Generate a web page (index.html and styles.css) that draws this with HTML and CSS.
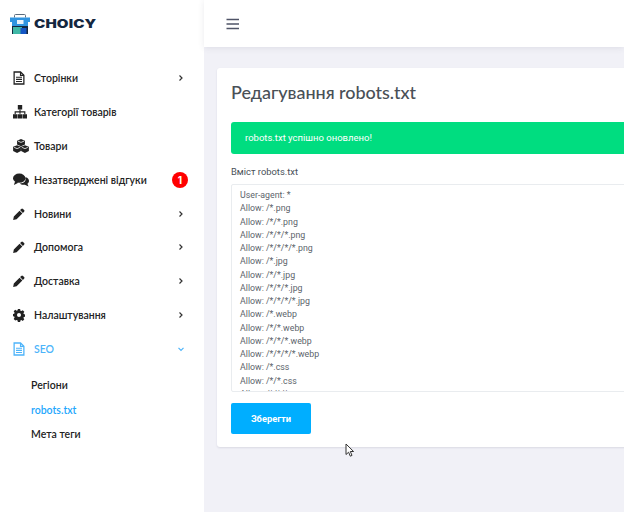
FILE: index.html
```html
<!DOCTYPE html>
<html lang="uk">
<head>
<meta charset="utf-8">
<title>robots.txt</title>
<link rel="stylesheet" href="styles.css">
</head>
<body>
<div class="app">
  <aside class="sidebar">
    <div class="logo">
      <svg class="logo-mark" width="20" height="20" viewBox="0 0 20 20">
        <path d="M4.500 3.500V1.500a1 1 0 0 1 1-1h9a1 1 0 0 1 1 1v2" fill="none" stroke="#5a6b7d" stroke-width="1"/>
        <rect x="0" y="3.500" width="20" height="4.500" fill="#2f94e0"/>
        <rect x="2" y="8" width="16" height="4" fill="#2f94e0"/>
        <rect x="2" y="12" width="16" height="8" fill="#14273f"/>
        <rect x="3" y="13" width="9" height="7" fill="#3fb8a6"/>
        <rect x="10.500" y="14" width="6" height="6" fill="#1456c4"/>
        <rect x="7" y="6" width="6.500" height="4" fill="#e9f2fa"/>
      </svg>
      <span class="logo-text">CHOICY</span>
    </div>
    <nav class="menu">
      <a class="item"><svg class="ico ico-sm" viewBox="0 0 16 18"><path d="M1.500 1h8.500l4.500 4.500V17h-13z" fill="#fff" stroke="#222" stroke-width="1.700"/><path d="M10 1v4.500h4.500" fill="none" stroke="#222" stroke-width="1.500"/><path d="M4 8h8M4 10.800h8M4 13.600h8" stroke="#222" stroke-width="1.500"/></svg><span class="label">Сторінки</span><svg class="chev" viewBox="0 0 8 8"><path d="M2.500 1.500l2.500 2.500-2.500 2.500" fill="none" stroke="#333" stroke-width="1.200"/></svg></a>
      <a class="item"><svg class="ico ico-md" viewBox="0 0 16 16"><path d="M5.500 0h5v5h-5zM0 10.500h5v5H0zM5.500 10.500h5v5h-5zM11 10.500h5v5h-5z" fill="#222"/><path d="M8 5v5M2.500 10.500V7.800h11v2.700" fill="none" stroke="#222" stroke-width="1.300"/></svg><span class="label">Категорії товарів</span></a>
      <a class="item"><svg class="ico ico-lg" viewBox="0 0 18 16"><path d="M9 0l4.500 1.900v4.500L9 8.300 4.500 6.400V1.900z" fill="#222"/><path d="M4.500 7l4.400 1.900v4.900L4.500 16 0 13.800V8.900zM13.500 7l4.500 1.900v4.900L13.500 16l-4.400-2.200V8.900z" fill="#222"/><path d="M5.500 2.400L9 3.900l3.500-1.500M1.200 9.600l3.300 1.400 3.300-1.400M10.200 9.600l3.300 1.400 3.300-1.400" fill="none" stroke="#fff" stroke-width=".9"/></svg><span class="label">Товари</span></a>
      <a class="item"><svg class="ico ico-lg" viewBox="0 0 18 15"><ellipse cx="7" cy="5.500" rx="7" ry="5.200" fill="#222"/><path d="M2.500 8.500L1 13l5-2.500z" fill="#222"/><path d="M15.500 4.700C17 5.700 18 7 18 8.500c0 1.300-.7 2.400-1.800 3.300l1.300 3-4.200-2c-2.300.4-4.600-.2-5.800-1.500 4.300.2 8.300-2.800 6-6.600z" fill="#222"/></svg><span class="label">Незатверджені відгуки</span><span class="badge">1</span></a>
      <a class="item"><svg class="ico ico-sm" viewBox="0 0 16 16"><path d="M11 1.200a1.600 1.600 0 0 1 2.300 0l1.500 1.500a1.600 1.600 0 0 1 0 2.300l-1.600 1.600-3.800-3.800zM8.700 3.500l3.800 3.800-7.700 7.700-4.600.9.900-4.700z" fill="#222"/></svg><span class="label">Новини</span><svg class="chev" viewBox="0 0 8 8"><path d="M2.500 1.500l2.500 2.500-2.500 2.500" fill="none" stroke="#333" stroke-width="1.200"/></svg></a>
      <a class="item"><svg class="ico ico-sm" viewBox="0 0 16 16"><path d="M11 1.200a1.600 1.600 0 0 1 2.300 0l1.500 1.500a1.600 1.600 0 0 1 0 2.300l-1.600 1.600-3.800-3.800zM8.700 3.500l3.800 3.800-7.700 7.700-4.600.9.900-4.700z" fill="#222"/></svg><span class="label">Допомога</span><svg class="chev" viewBox="0 0 8 8"><path d="M2.500 1.500l2.500 2.500-2.500 2.500" fill="none" stroke="#333" stroke-width="1.200"/></svg></a>
      <a class="item"><svg class="ico ico-sm" viewBox="0 0 16 16"><path d="M11 1.200a1.600 1.600 0 0 1 2.300 0l1.500 1.500a1.600 1.600 0 0 1 0 2.300l-1.600 1.600-3.800-3.800zM8.700 3.500l3.800 3.800-7.700 7.700-4.600.9.900-4.700z" fill="#222"/></svg><span class="label">Доставка</span><svg class="chev" viewBox="0 0 8 8"><path d="M2.500 1.500l2.500 2.500-2.500 2.500" fill="none" stroke="#333" stroke-width="1.200"/></svg></a>
      <a class="item"><svg class="ico ico-sm" viewBox="0 0 16 16"><path fill-rule="evenodd" d="M6.500 0h3l.4 2.200 1.300.6L13 1.500l2.100 2.100-1.200 1.900.5 1.300 1.600.4v3l-1.600.4-.5 1.300 1.200 1.900-2.100 2.100-1.800-1.200-1.300.5-.4 2.200h-3l-.4-2.200-1.300-.5L3 15.400.9 13.300l1.200-1.900-.5-1.300L0 9.700v-3l1.600-.4.500-1.300L.9 3.100 3 1l1.900 1.300 1.300-.6zM8 5.300a2.700 2.700 0 1 0 0 5.400 2.700 2.700 0 0 0 0-5.400z" fill="#222"/></svg><span class="label">Налаштування</span><svg class="chev" viewBox="0 0 8 8"><path d="M2.500 1.500l2.500 2.500-2.500 2.500" fill="none" stroke="#333" stroke-width="1.200"/></svg></a>
      <a class="item active"><svg class="ico ico-sm" viewBox="0 0 16 18"><path d="M1.500 1h8.500l4.500 4.500V17h-13z" fill="#fff" stroke="#4db4fa" stroke-width="1.700"/><path d="M10 1v4.500h4.500" fill="none" stroke="#4db4fa" stroke-width="1.500"/><path d="M4 8h8M4 10.800h8M4 13.600h8" stroke="#4db4fa" stroke-width="1.500"/></svg><span class="label">SEO</span><svg class="chev" viewBox="0 0 8 8"><path d="M1.500 2.800l2.500 2.500 2.500-2.500" fill="none" stroke="#4db4fa" stroke-width="1.200"/></svg></a>
      <div class="submenu">
        <a class="subitem">Регіони</a>
        <a class="subitem current">robots.txt</a>
        <a class="subitem">Мета теги</a>
      </div>
    </nav>
  </aside>
  <div class="main">
    <header class="topbar">
      <svg class="burger" width="14" height="12" viewBox="0 0 14 12"><path d="M.5 1.500h12.500M.5 6h12.500M.5 10.500h12.500" stroke="#4f5467" stroke-width="1.500"/></svg>
    </header>
    <div class="content">
      <section class="card">
        <h1 class="title">Редагування robots.txt</h1>
        <div class="alert">robots.txt успішно оновлено!</div>
        <label class="field-label" for="robots">Вміст robots.txt</label>
        <textarea class="editor" id="robots" readonly>User-agent: *
Allow: /*.png
Allow: /*/*.png
Allow: /*/*/*.png
Allow: /*/*/*/*.png
Allow: /*.jpg
Allow: /*/*.jpg
Allow: /*/*/*.jpg
Allow: /*/*/*/*.jpg
Allow: /*.webp
Allow: /*/*.webp
Allow: /*/*/*.webp
Allow: /*/*/*/*.webp
Allow: /*.css
Allow: /*/*.css
Allow: /*/*/*.css</textarea>
        <button class="save" type="button">Зберегти</button>
      </section>
    </div>
  </div>
</div>
<svg class="cursor" width="10" height="15" viewBox="0 0 10 15"><path d="M1 1v10.500l2.600-2.300 1.700 4 1.700-.8-1.700-3.900h3.300z" fill="#fff" stroke="#333" stroke-width="1"/></svg>
</body>
</html>
```
FILE: styles.css
```css
* { box-sizing: border-box; }
html, body { margin: 0; height: 100%; overflow: hidden; }
body { font-family: "Inter", "Liberation Sans", sans-serif; background: #f1f1f7; }
.app { display: flex; width: 624px; height: 512px; overflow: hidden; }

.sidebar { flex: none; width: 204px; background: #fff; }
.logo { display: flex; align-items: center; gap: 4px; height: 47px; padding: 0 0 0 10px; }
.logo-mark { flex: none; }
.logo-text { font-family: "Inter", sans-serif; font-size: 11.500px; font-weight: 900; color: #14273f; letter-spacing: .1px; transform: scaleX(1.310); transform-origin: left; }
.menu { display: flex; flex-direction: column; padding-top: 14px; }
.item { display: flex; align-items: center; height: 33.900px; padding: 0 18px 0 13px; color: #222; font-size: 11px; }
.item.active { color: #4db4fa; }
.ico { flex: none; }
.ico-sm { width: 12px; height: 14px; margin-right: 9px; }
.ico-md { width: 14px; height: 14px; margin-right: 7px; }
.ico-lg { width: 16px; height: 14px; margin-right: 5px; }
.label { flex: 1; font-family: "Lato", sans-serif; font-size: 10.500px; font-weight: 600; }
.chev { flex: none; width: 8px; height: 8px; margin-right: 1px; }
.badge { flex: none; display: flex; align-items: center; justify-content: center; width: 16px; height: 16px; margin-right: -2px; border-radius: 50%; background: #f00; color: #fff; font-size: 10px; font-weight: 700; }
.submenu { display: flex; flex-direction: column; padding: 7px 0 0 31px; }
.subitem { height: 24.500px; line-height: 24.500px; font-family: "Lato", sans-serif; font-size: 10.500px; font-weight: 600; color: #222; }
.subitem.current { color: #1ea7fd; }

.main { flex: 1; min-width: 0; display: flex; flex-direction: column; }
.topbar { flex: none; display: flex; align-items: center; height: 47px; padding-left: 22px; background: #fff; box-shadow: 0 1px 6px rgba(80, 80, 110, .12); position: relative; }
.content { flex: 1; padding: 21px 0 0 13px; }
.card { width: 560px; height: 379px; padding: 14px; background: #fff; border-radius: 3px; box-shadow: 0 1px 2px rgba(80, 80, 110, .14); }
.title { margin: 0; height: 40px; font-family: "Lato", sans-serif; font-size: 18px; line-height: 21px; font-weight: 500; letter-spacing: -.05px; color: #495057; }
.alert { height: 32px; padding: 0 14px; line-height: 32px; border-radius: 3px; background: #00dd80; color: #fff; font-family: "Roboto", sans-serif; font-size: 9.500px; }
.field-label { display: block; margin-top: 12px; height: 18px; line-height: 12px; font-family: "Roboto", sans-serif; font-size: 9.400px; color: #495057; }
.editor { display: block; width: 100%; height: 208px; padding: 4px 8px; border: 1px solid #e9ecef; border-radius: 2px; font-family: "Roboto", sans-serif; font-size: 8.800px; line-height: 13.250px; color: #5c646b; resize: none; overflow: hidden; outline: none; }
.save { display: block; width: 80px; height: 31px; margin-top: 11px; border: 0; border-radius: 2px; background: #00aeff; color: #fff; font-family: "Roboto", sans-serif; font-size: 9.300px; font-weight: 700; }

.cursor { position: absolute; left: 345px; top: 443px; }
```
